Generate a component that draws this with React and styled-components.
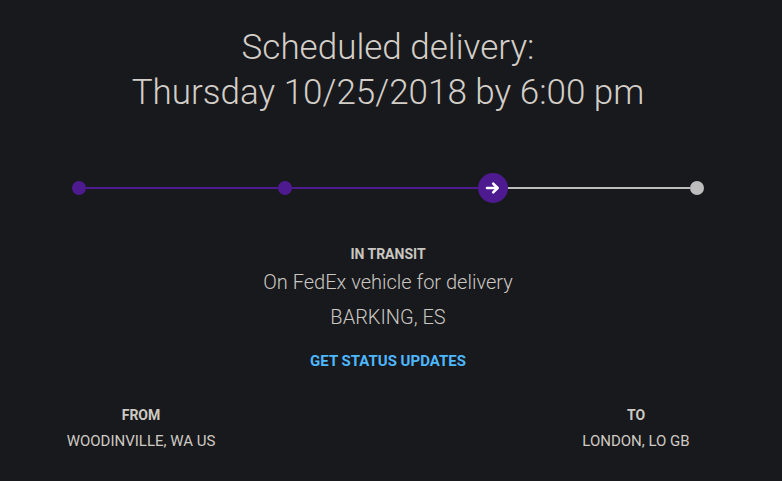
import React from 'react';
import styled, {createGlobalStyle} from 'styled-components';

const GlobalStyle = createGlobalStyle`
  html, body {
    margin: 0;
    padding: 0;
    background: #18191d;
  }
  body {
    font-family: Roboto, "Noto Sans", sans-serif;
  }
`;

const Page = styled.div`
  width: 776px;
  height: 481px;
  background: #18191d;
  color: #cfcac3;
  display: flex;
  flex-direction: column;
  align-items: center;
  overflow: hidden;
`;

const Heading = styled.h1`
  margin: 25px 0 0;
  font-size: 35px;
  font-weight: 300;
  line-height: 45px;
  text-align: center;
  color: #d3cec7;
`;

const Track = styled.div`
  margin-top: 58px;
  width: 632px;
  display: flex;
  align-items: center;
`;

const Dot = styled.div`
  flex: none;
  width: ${(props) => (props.big ? '30px' : '14px')};
  height: ${(props) => (props.big ? '30px' : '14px')};
  margin: ${(props) => (props.big ? '0 -10px 0 -6px' : '0')};
  border-radius: 50%;
  background: ${(props) => (props.done ? '#4d1a8f' : '#bdbdbd')};
  display: flex;
  align-items: center;
  justify-content: center;
  position: relative;
  z-index: 1;
`;

const Line = styled.div`
  flex: 1;
  height: 2px;
  background: ${(props) => (props.done ? '#4d1a8f' : '#bdbdbd')};
`;

const Status = styled.div`
  margin-top: 43px;
  font-size: 14px;
  font-weight: 700;
  color: #c9c6c2;
  line-height: 16px;
`;

const Detail = styled.div`
  margin-top: ${(props) => props.gap || '0'};
  font-size: 20px;
  font-weight: 300;
  line-height: 24px;
  color: #cbc7c1;
`;

const UpdatesLink = styled.a`
  margin-top: 23px;
  font-size: 15px;
  font-weight: 700;
  color: #4db7ff;
  text-decoration: none;
  line-height: 18px;
  cursor: pointer;
`;

const Places = styled.div`
  margin-top: 37px;
  width: 100%;
  display: grid;
  grid-template-columns: 180px 180px;
  justify-content: space-between;
  padding: 0 50px 0 51px;
  box-sizing: border-box;
`;

const Place = styled.div`
  display: flex;
  flex-direction: column;
  align-items: center;
  gap: 9px;
`;

const PlaceLabel = styled.div`
  font-size: 14px;
  font-weight: 700;
  line-height: 16px;
  color: #cdc9c2;
`;

const PlaceName = styled.div`
  font-size: 15px;
  font-weight: 400;
  line-height: 18px;
  color: #cfcac3;
`;

function ArrowIcon() {
  return (
    <svg width="16" height="16" viewBox="0 0 16 16">
      <path d="M2 8h10" stroke="#fff" strokeWidth="2.6" strokeLinecap="round"/>
      <path d="M8.2 3.6L12.6 8L8.2 12.4" fill="none" stroke="#fff" strokeWidth="2.6"
            strokeLinecap="round" strokeLinejoin="round"/>
    </svg>
  );
}

export default function App() {
  return (
    <Page>
      <GlobalStyle/>
      <Heading>
        Scheduled delivery:
        <br/>
        Thursday 10/25/2018 by 6:00 pm
      </Heading>
      <Track>
        <Dot done/>
        <Line done/>
        <Dot done/>
        <Line done/>
        <Dot done big>
          <ArrowIcon/>
        </Dot>
        <Line/>
        <Dot/>
      </Track>
      <Status>IN TRANSIT</Status>
      <Detail gap="8px">On FedEx vehicle for delivery</Detail>
      <Detail gap="11px">BARKING, ES</Detail>
      <UpdatesLink>GET STATUS UPDATES</UpdatesLink>
      <Places>
        <Place>
          <PlaceLabel>FROM</PlaceLabel>
          <PlaceName>WOODINVILLE, WA US</PlaceName>
        </Place>
        <Place>
          <PlaceLabel>TO</PlaceLabel>
          <PlaceName>LONDON, LO GB</PlaceName>
        </Place>
      </Places>
    </Page>
  );
}
